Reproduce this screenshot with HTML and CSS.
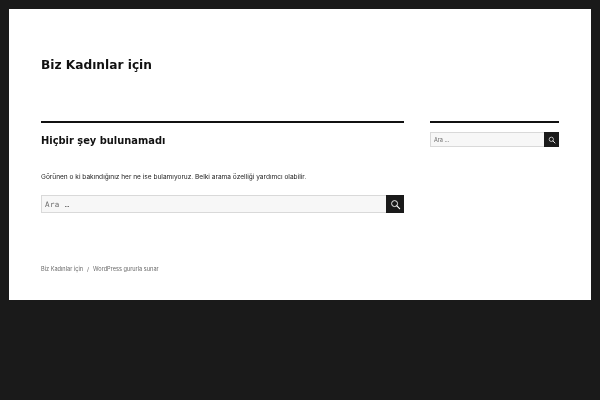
FILE: index.html
```html
<!DOCTYPE html>
<html lang="tr">
<head>
<meta charset="utf-8">
<title>Biz Kadınlar için</title>
<link rel="stylesheet" href="styles.css">
</head>
<body>
<div class="site">
  <header class="site-header"><h1 class="site-title">Biz Kadınlar için</h1></header>
  <div class="site-inner">
    <main class="main">
      <h2 class="page-title">Hiçbir şey bulunamadı</h2>
      <p class="notice">Görünen o ki bakındığınız her ne ise bulamıyoruz. Belki arama özelliği yardımcı olabilir.</p>
      <form class="search search-large">
        <span class="field">Ara …</span>
        <span class="btn"><svg viewBox="0 0 24 24" width="11" height="11"><circle cx="10" cy="10" r="6.5" fill="none" stroke="#fff" stroke-width="2"/><path d="M15 15L21 21" stroke="#fff" stroke-width="2.6" stroke-linecap="round"/></svg></span>
      </form>
    </main>
    <aside class="sidebar">
      <form class="search search-small">
        <span class="field">Ara …</span>
        <span class="btn"><svg viewBox="0 0 24 24" width="8" height="8"><circle cx="10" cy="10" r="6.5" fill="none" stroke="#fff" stroke-width="2"/><path d="M15 15L21 21" stroke="#fff" stroke-width="2.6" stroke-linecap="round"/></svg></span>
      </form>
    </aside>
  </div>
  <footer class="footer"><span>Biz Kadınlar için</span><span class="sep">/</span><span>WordPress gururla sunar</span></footer>
</div>
</body>
</html>
```
FILE: styles.css
```css
* { box-sizing: border-box; }
html, body { margin: 0; height: 100%; }
body { background: #1a1a1a; padding: 9px; overflow: hidden; font-family: "Inter", "Liberation Sans", sans-serif; color: #1a1a1a; }
.site { background: #fff; height: 291px; width: 582px; padding: 0 32px; filter: blur(0.2px); }
.site-header { height: 112px; padding-top: 48px; }
.site-title { margin: 0; font: bold 12.2px/17px "DejaVu Sans", sans-serif; color: #111; }
.site-inner { display: flex; justify-content: space-between; height: 144px; }
.main { width: 363px; border-top: 2px solid #111; }
.sidebar { width: 129px; border-top: 2px solid #111; padding-top: 9px; }
.page-title { margin: 10px 0 0; font: bold 9.9px/15px "DejaVu Sans", sans-serif; color: #111; }
.notice { margin: 23px 0 0; font-size: 6.55px; line-height: 13px; color: #222; }
.search { display: flex; background: #f7f7f7; border: 1px solid #d9d9d9; border-right: 0; }
.search-large { margin-top: 11px; height: 18px; }
.search-small { height: 15px; }
.field { flex: 1; color: #686868; display: flex; align-items: center; }
.search-large .field { font: 7.5px "DejaVu Sans Mono", monospace; padding-left: 3px; letter-spacing: 0.4px; }
.search-small .field { font-size: 5.5px; padding-left: 3px; }
.btn { background: #1a1a1a; display: flex; align-items: center; justify-content: center; margin: -1px 0; }
.search-large .btn { width: 18px; }
.search-small .btn { width: 15px; }
.footer { display: flex; font-size: 5.6px; color: #686868; line-height: 9px; }
.sep { margin: 0 4px; }
```
